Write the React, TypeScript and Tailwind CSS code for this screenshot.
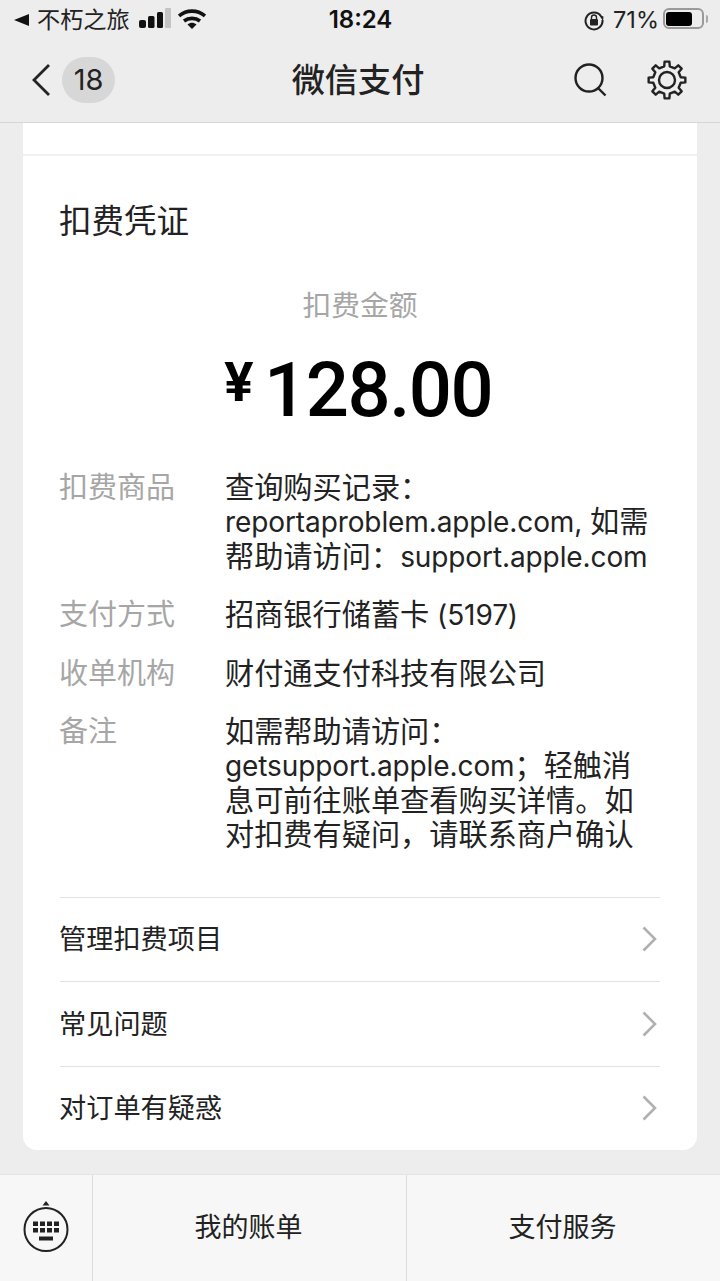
const FONT = 'font-["Inter","Noto_Sans_CJK_SC",sans-serif]';

const details = [
  { label: '扣费商品', value: ['查询购买记录：', 'reportaproblem.apple.com, 如需', '帮助请访问：support.apple.com'], gap: 'mb-[24px]' },
  { label: '支付方式', value: ['招商银行储蓄卡 (5197)'], gap: 'mb-[24px]' },
  { label: '收单机构', value: ['财付通支付科技有限公司'], gap: 'mb-[24px]' },
  { label: '备注', value: ['如需帮助请访问：', 'getsupport.apple.com；轻触消', '息可前往账单查看购买详情。如', '对扣费有疑问，请联系商户确认'], gap: '' },
];

const links = ['管理扣费项目', '常见问题', '对订单有疑惑'];

// eight-tooth outline, joined with round corners by the stroke
function gearPath(cx: number, cy: number, outer: number, inner: number) {
  const points: string[] = [];
  for (let i = 0; i < 8; i++) {
    const a = (i * Math.PI) / 4 - Math.PI / 2;
    const at = (r: number, d: number) => `${(cx + r * Math.cos(a + d)).toFixed(2)} ${(cy + r * Math.sin(a + d)).toFixed(2)}`;
    points.push(at(inner, -0.2), at(outer, -0.13), at(outer, 0.13), at(inner, 0.2));
  }
  return `M${points.join('L')}Z`;
}

// latin runs sit slightly smaller and tighter than the CJK around them
function MixedLine({ text }: { text: string }) {
  const parts = text.split(/([\x20-\x7e]+)/);
  return (
    <div>
      {parts.map((part, i) =>
        i % 2 === 1 ? (
          <span key={i} className="text-[28px] tracking-[-0.1px]">{part}</span>
        ) : (
          <span key={i}>{part}</span>
        ),
      )}
    </div>
  );
}

function StatusBar() {
  return (
    <div className="flex h-[40px] items-center justify-between pl-[14px] pr-[12px] text-[#1a1a1a]">
      <div className="flex w-[240px] items-center">
        <svg width="15" height="14" viewBox="0 0 15 14"><path d="M15 1v12L0 7z" fill="#111" /></svg>
        <span className="ml-[8px] text-[23.200px] leading-[28px] text-[#222]">不朽之旅</span>
        <svg className="ml-[9px]" width="32" height="24" viewBox="0 0 32 24">
          <rect x="0" y="12" width="7" height="8" rx="2" fill="#111" />
          <rect x="9" y="8" width="6.500" height="12" rx="1.500" fill="#111" />
          <rect x="18" y="4" width="6" height="16" rx="1.500" fill="#111" />
          <rect x="26" y="0" width="6" height="20" rx="1" fill="#c4c4c4" />
        </svg>
        <svg className="ml-[7px]" width="28" height="24" viewBox="0 0 28 24">
          <path d="M1 8C8.500 1.500 19.500 1.500 27 8" fill="none" stroke="#111" strokeWidth="3.600" />
          <path d="M6 13C10.500 9.500 17.500 9.500 22 13" fill="none" stroke="#111" strokeWidth="3.600" />
          <path d="M9.500 16.500C12.500 14 15.500 14 18.500 16.500L14 21z" fill="#111" />
        </svg>
      </div>
      <span className="mr-[1px] text-[24px] font-semibold leading-[28px] text-[#111]">18:24</span>
      <div className="flex w-[240px] items-center justify-end">
        <svg width="22" height="22" viewBox="0 0 22 22" fill="none">
          <path d="M18 7A8.500 8.500 0 1 0 19.500 11" stroke="#222" strokeWidth="2" />
          <path d="M16 6l4.500 1.500L20 12z" fill="#222" />
          <rect x="7" y="10" width="8" height="6.500" rx="1" fill="#222" />
          <path d="M8.500 10V8.500a2.500 2.500 0 0 1 5 0V10" stroke="#222" strokeWidth="1.400" />
        </svg>
        <span className="ml-[8px] text-[23.500px] leading-[28px] text-[#222]">71%</span>
        <div className="mb-[3px] ml-[4px] flex h-[21px] w-[41px] items-center rounded-[6px] border-2 border-[#9a9a9a] p-[1.500px]">
          <div className="h-[14px] w-[26px] rounded-[3px] bg-black" />
        </div>
        <div className="mb-[3px] ml-[2px] h-[8px] w-[2px] rounded-r-full bg-[#a8a8a8]" />
      </div>
    </div>
  );
}

function NavBar() {
  return (
    <div className="flex h-[83px] items-center justify-between border-b border-[#d6d6d6] pb-[3px] pl-[32px] pr-[33px]">
      <div className="flex w-[200px] items-center">
        <svg width="19" height="34" viewBox="0 0 19 34" fill="none">
          <path d="M17 2L2 17l15 15" stroke="#222" strokeWidth="2.800" />
        </svg>
        <span className="ml-[11px] flex h-[46px] w-[53px] items-center justify-center rounded-[23px] bg-[#d7d7d7] text-[29px] text-[#222]">18</span>
      </div>
      <span className="mr-[3px] text-[33.200px] font-medium leading-[40px] text-[#222]">微信支付</span>
      <div className="flex w-[200px] items-center justify-end">
        <svg width="33" height="34" viewBox="0 0 33 34" fill="none">
          <circle cx="15" cy="15" r="13.500" stroke="#222" strokeWidth="2.400" />
          <path d="M24 25l7.500 7.500" stroke="#222" strokeWidth="2.400" />
        </svg>
        <svg className="ml-[40px]" width="40" height="40" viewBox="0 0 40 40" fill="none" stroke="#222" strokeWidth="2.400" strokeLinejoin="round">
          <path d={gearPath(20, 20, 18.500, 14)} />
          <circle cx="20" cy="20" r="8" />
        </svg>
      </div>
    </div>
  );
}

function KeyboardToggle() {
  return (
    <div className="flex w-[93px] items-center justify-center border-r border-[#dcdcdc]">
      <svg className="mb-[5px]" width="46" height="52" viewBox="0 0 46 52" fill="none">
        <path d="M19.500 5.500l3.500-4.500 3.500 4.500z" fill="#222" />
        <circle cx="23" cy="29.500" r="21.500" stroke="#222" strokeWidth="2" />
        {[0, 1, 2, 3].map((i) => (
          <rect key={`a${i}`} x={10 + i * 7} y={21.500} width="5" height="4.500" fill="#222" />
        ))}
        {[0, 1, 2, 3].map((i) => (
          <rect key={`b${i}`} x={10 + i * 7} y={28} width="5" height="4.500" fill="#222" />
        ))}
        <rect x="16" y="36.500" width="14" height="4" fill="#222" />
      </svg>
    </div>
  );
}

export default function App() {
  return (
    <div className={`${FONT} flex h-[1281px] w-[720px] flex-col overflow-hidden bg-[#ededed]`}>
      <StatusBar />
      <NavBar />

      <div className="mx-[23px] h-[1027px] rounded-b-[14px] bg-white">
        <div className="h-[33px] border-b-2 border-[#f1f1f1]" />
        <div className="px-[37px] pt-[44px]">
          <h1 className="-ml-px text-[32.500px] leading-[44px] text-[#222]">扣费凭证</h1>
          <p className="mt-[42px] text-center text-[28.800px] leading-[40px] text-[#a6a6a6]">扣费金额</p>

          <div className="mt-[19px] flex items-start justify-center pr-[4px] text-black">
            <span className="mt-[7px] text-[53px] font-bold leading-[60px]">¥</span>
            <span className="ml-[10px] font-['Roboto',sans-serif] text-[76px] font-medium leading-[90px] tracking-[-1.500px]">128.00</span>
          </div>

          <div className="mt-[36px]">
            {details.map((row) => (
              <div key={row.label} className={`flex ${row.gap} text-[29.200px] leading-[34.400px]`}>
                <div className="-ml-px mr-px w-[165px] shrink-0 text-[29px] text-[#a6a6a6]">{row.label}</div>
                <div className="whitespace-nowrap text-[#222]">
                  {row.value.map((line) => (
                    <MixedLine key={line} text={line} />
                  ))}
                </div>
              </div>
            ))}
          </div>

          <div className="mt-[44px]">
            {links.map((text) => (
              <div key={text} className="flex h-[84.500px] items-center justify-between border-t border-[#e3e3e3] text-[27.200px] text-[#222]">
                <span className="-ml-px pt-[2px]">{text}</span>
                <svg className="mr-[3px]" width="15" height="26" viewBox="0 0 15 26" fill="none">
                  <path d="M1.500 1.500L13 13 1.500 24.500" stroke="#b0b0b0" strokeWidth="2.600" />
                </svg>
              </div>
            ))}
          </div>
        </div>
      </div>

      <div className="mt-[24px] flex h-[107px] border-t border-[#e4e4e4] bg-[#f7f7f7] text-[27px] text-[#222]">
        <KeyboardToggle />
        <div className="flex w-[314px] items-center justify-center border-r border-[#dcdcdc] pr-[2px]">我的账单</div>
        <div className="flex flex-1 items-center justify-center pr-[2px]">支付服务</div>
      </div>
    </div>
  );
}
